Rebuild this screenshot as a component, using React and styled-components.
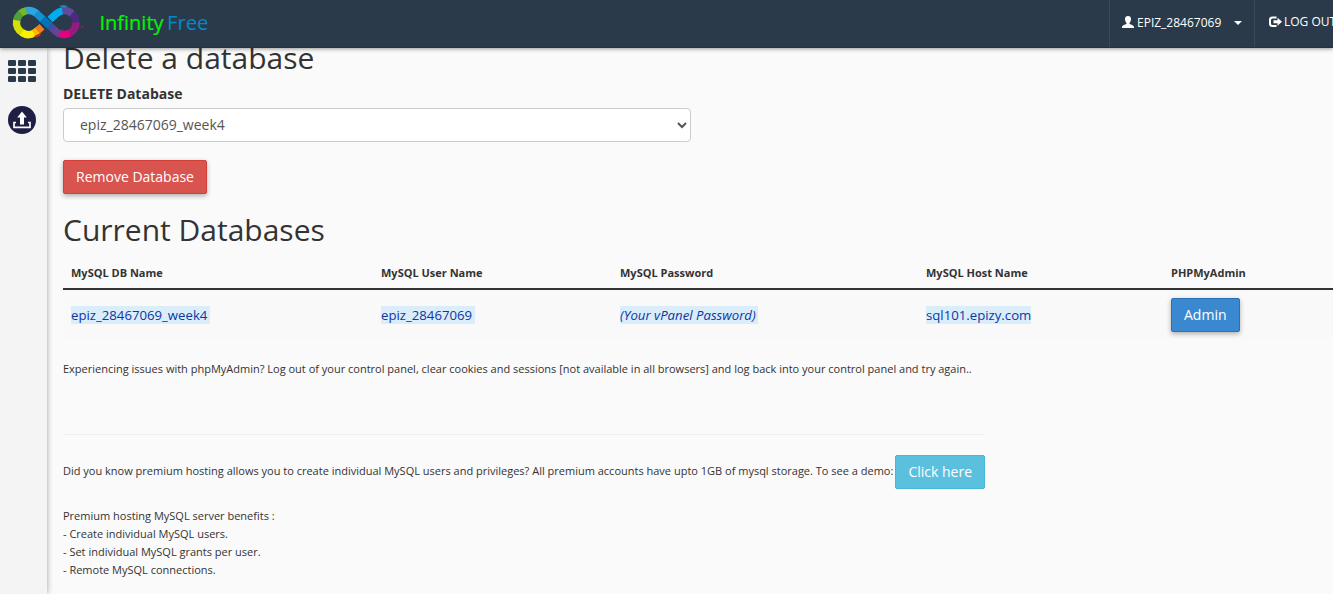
import React from "react";
import styled, { createGlobalStyle, css } from "styled-components";

const Global = createGlobalStyle`
  *, *::before, *::after { box-sizing: border-box; }
  body { margin: 0; background: #fafafa; color: #333; font: 11px/18px "Open Sans", "Noto Sans", sans-serif; overflow: hidden; }
`;

const Page = styled.div`
  height: 594px;
  display: flex;
  flex-direction: column;
  overflow: hidden;
`;
const Navbar = styled.header`
  height: 48px;
  display: flex;
  align-items: stretch;
  overflow: hidden;
  background: #2a3a4a;
  border-bottom: 1px solid #243342;
`;
const NavShade = styled.div`
  position: relative;
  z-index: 2;
  flex: none;
  box-shadow: 0 1px 4px rgba(0, 0, 0, 0.4);
`;
const Brand = styled.a`
  display: flex;
  flex: 1;
  padding-left: 8px;
`;
const NavItem = styled.a`
  flex: none;
  display: flex;
  align-items: center;
  width: ${(p) => p.$width}px;
  padding: 0 0 3px ${(p) => p.$pad}px;
  border-left: 1px solid #37495a;
  color: #fff;
  font-size: 12px;
  white-space: nowrap;

  svg { flex: none; }
`;
const NavText = styled.span`
  margin-left: ${(p) => p.$gap}px;
  padding-top: ${(p) => p.$drop || 0}px;
`;
const Caret = styled.i`
  margin: 1px 0 0 13px;
  border: 4px solid transparent;
  border-top-color: #fff;
  border-bottom: 0;
`;
const Body = styled.div`
  flex: 1;
  min-height: 0;
  display: flex;
`;
const Sidebar = styled.nav`
  flex: none;
  width: 47px;
  padding: 12px 0 0 8px;
  background: #f4f4f4;
  box-shadow: 0 0 6px rgba(0, 0, 0, 0.35);
  display: flex;
  flex-direction: column;
  gap: 23px;
`;
const Main = styled.main`
  flex: 1;
  min-width: 0;
  margin-top: -7px;
  padding-left: 16px;
`;
const Title = styled.h2`
  margin: 0;
  font-size: 30px;
  font-weight: 400;
  line-height: 33px;
`;
const Label = styled.label`
  display: block;
  margin: 10px 0 4px;
  font-size: 14px;
  font-weight: 700;
  line-height: 20px;
`;
const Select = styled.select`
  display: block;
  width: 628px;
  height: 34px;
  padding: 5px 12px 7px;
  border: 1px solid #ccc;
  border-radius: 4px;
  background: #fff;
  color: #555;
  font: 14px/20px "Open Sans", "Noto Sans", sans-serif;
`;
const tones = {
  danger: css`background: #d9534f; border-color: #d43f3a;`,
  primary: css`background: #3a89d0; border-color: #2a72b5;`,
  info: css`background: #5bc0de; border-color: #46b8da;`,
};
const Button = styled.button`
  height: 34px;
  padding: 0 12px;
  border: 1px solid;
  border-radius: 2px;
  color: #fff;
  font: 14px/20px "Open Sans", "Noto Sans", sans-serif;
  vertical-align: middle;
  white-space: nowrap;
  ${(p) => tones[p.$tone]}
  ${(p) => p.$raised && css`box-shadow: 0 2px 5px rgba(0, 0, 0, 0.3);`}
`;
const Actions = styled.div`
  margin: 18px 0 19px;
  display: flex;
`;
const Table = styled.table`
  width: 1286px;
  margin-top: 8px;
  table-layout: fixed;
  border-collapse: collapse;
`;
const Col = styled.col`
  width: ${(p) => p.$w}px;
`;
const Th = styled.th`
  height: 35px;
  padding: 4px 8px 0;
  border-bottom: 2px solid #333;
  text-align: left;
  font-weight: 700;
`;
const Td = styled.td`
  height: 50px;
  padding: 0 8px;
  background: #f9f9f9;
`;
const Value = styled.span`
  display: inline-block;
  height: 18px;
  padding-right: ${(p) => p.$end || 0}px;
  background: #d9edfb;
  color: #0f35a3;
  font-size: 13.2px;
  font-style: ${(p) => (p.$italic ? "italic" : "normal")};
  vertical-align: middle;
`;
const Note = styled.p`
  margin: 21px 0 0;
`;
const Promo = styled.section`
  width: 922px;
  margin-top: 56px;
  padding-top: 20px;
  border-top: 1px solid #eee;
`;
const PromoLine = styled.div`
  display: flex;
  align-items: center;
  justify-content: space-between;
  white-space: nowrap;
`;
const PromoText = styled.span`
  padding-bottom: 2px;
`;
const Benefits = styled.div`
  margin-top: 18px;
`;

const arc = (cx, from, to) => {
  const at = (deg) => {
    const a = (deg * Math.PI) / 180;
    return `${(cx + 12 * Math.cos(a)).toFixed(2)} ${(22.5 + 12 * Math.sin(a)).toFixed(2)}`;
  };
  return `M${at(from)}A12 12 0 0 1 ${at(to)}`;
};

function Logo() {
  return (
    <svg width="206" height="44" viewBox="8 0 206 44">
      <g fill="none" strokeWidth="7.4">
        <path d={arc(28.5, 187, 232)} stroke="#4f9f3a" />
        <path d={arc(28.5, 230, 262)} stroke="#76b82a" />
        <path d={arc(28.5, 120, 190)} stroke="#d6df00" />
        <path d={arc(28.5, 60, 123)} stroke="#ffed00" />
        <path d="M34 33.200L38 30.300" stroke="#fbba00" />
        <path d="M37.500 30.700L42 26.800" stroke="#ee7f1a" />
        <path d="M50 19.500L56.300 13.800A12 12 0 0 1 63 10.600" stroke="#00aeef" />
        <path d={arc(64, 262, 315)} stroke="#5f4b9b" />
        <path d={arc(64, 312, 362)} stroke="#4b2a80" />
        <path d={arc(64, 0, 65)} stroke="#951b81" />
        <path d={arc(64, 62, 112)} stroke="#e6007e" />
        <path d={arc(28.5, 260, 312)} stroke="#2ba6de" />
        <path d="M36 13.100L43 19.500" stroke="#1591d2" />
        <path d="M42.500 19L50 26" stroke="#0075bd" />
        <path d="M49.500 25.500L54 29.700" stroke="#3d4f9f" />
        <path d="M53.500 29.200L56.300 31.700A12 12 0 0 0 60 33.900" stroke="#6a4294" />
      </g>
      <path d="M34 36L41 33L40 36L36 37.500z" fill="#d5281b" />
      <path d="M59 6l4-1 5 1-4 2z" fill="#168bb5" />
      <path d="M81 26l3 0-2 2zM61 29l3 0-2 2z" fill="#a71768" />
      <g fontFamily="Open Sans, Noto Sans, sans-serif" fontSize="20.4">
        <text x="99.500" y="29.600" fill="#00f500" stroke="#00f500" strokeWidth="0.2" textLength="64" lengthAdjust="spacingAndGlyphs">Infinity</text>
        <text x="167" y="29.600" fill="#0787c8" textLength="41.500" lengthAdjust="spacingAndGlyphs">Free</text>
      </g>
    </svg>
  );
}

function UserIcon() {
  return (
    <svg width="12" height="12" viewBox="0 0 12 12" fill="#fff">
      <path d="M6 0C8 0 9 1.2 9 3c0 1.800-.7 3-1.500 4v1c1.600.8 4.500 1.200 4.500 3.200V12H0v-.8C0 9.200 2.900 8.800 4.500 8V7C3.700 6 3 4.800 3 3c0-1.800 1-3 3-3z" />
    </svg>
  );
}

function LogoutIcon() {
  return (
    <svg width="13" height="12" viewBox="0 0 13 12">
      <path d="M7.500 1.500H3.500Q1 1.500 1 4v3.500Q1 10 3.500 10H7.500" fill="none" stroke="#fff" strokeWidth="2" />
      <path d="M4.500 4.300H8.500V1.800L13 5.800 8.500 9.800V7.300H4.500z" fill="#fff" />
    </svg>
  );
}

function GridIcon() {
  return (
    <svg width="28" height="23" viewBox="0 0 28 23" fill="#2a3a4a">
      {[0, 8, 16].map((y) => [0, 10, 20].map((x) => (
        <rect key={`${x}-${y}`} x={x} y={y} width="8" height="6" rx="1.3" />
      )))}
    </svg>
  );
}

function UploadIcon() {
  return (
    <svg width="28" height="28" viewBox="0 0 28 28">
      <circle cx="14" cy="14" r="14" fill="#1e1f42" />
      <path d="M14 5.500L18.800 11.500H16V18.500H12V11.500H9.200z" fill="#fff" />
      <path d="M8 16.500H6V21.300H22V16.500H20" fill="none" stroke="#fff" strokeWidth="1.700" />
    </svg>
  );
}

const headings = ["MySQL DB Name", "MySQL User Name", "MySQL Password", "MySQL Host Name", "PHPMyAdmin"];
const widths = [310, 239, 306, 245, 186];

export default function App() {
  return (
    <Page>
      <Global />
      <NavShade>
        <Navbar>
          <Brand><Logo /></Brand>
          <NavItem $width={145} $pad={12}>
            <UserIcon />
            <NavText $gap={3} $drop={2}>EPIZ_28467069</NavText>
            <Caret />
          </NavItem>
          <NavItem $width={79} $pad={14}>
            <LogoutIcon />
            <NavText $gap={2}>LOG OUT</NavText>
          </NavItem>
        </Navbar>
      </NavShade>
      <Body>
        <Sidebar>
          <GridIcon />
          <UploadIcon />
        </Sidebar>
        <Main>
          <Title>Delete a database</Title>
          <Label htmlFor="database">DELETE Database</Label>
          <Select id="database"><option>epiz_28467069_week4</option></Select>
          <Actions><Button $tone="danger" $raised>Remove Database</Button></Actions>
          <Title>Current Databases</Title>
          <Table>
            <colgroup>{widths.map((w) => <Col key={w} $w={w} />)}</colgroup>
            <thead><tr>{headings.map((h) => <Th key={h}>{h}</Th>)}</tr></thead>
            <tbody>
              <tr>
                <Td><Value $end={3}>epiz_28467069_week4</Value></Td>
                <Td><Value $end={3}>epiz_28467069</Value></Td>
                <Td><Value $italic $end={2}>(Your vPanel Password)</Value></Td>
                <Td><Value>sql101.epizy.com</Value></Td>
                <Td><Button $tone="primary" $raised>Admin</Button></Td>
              </tr>
            </tbody>
          </Table>
          <Note>Experiencing issues with phpMyAdmin? Log out of your control panel, clear cookies and sessions [not available in all browsers] and log back into your control panel and try again..</Note>
          <Promo>
            <PromoLine>
              <PromoText>Did you know premium hosting allows you to create individual MySQL users and privileges? All premium accounts have upto 1GB of mysql storage. To see a demo:</PromoText>
              <Button $tone="info">Click here</Button>
            </PromoLine>
            <Benefits>
              <div>Premium hosting MySQL server benefits :</div>
              <div>- Create individual MySQL users.</div>
              <div>- Set individual MySQL grants per user.</div>
              <div>- Remote MySQL connections.</div>
            </Benefits>
          </Promo>
        </Main>
      </Body>
    </Page>
  );
}
